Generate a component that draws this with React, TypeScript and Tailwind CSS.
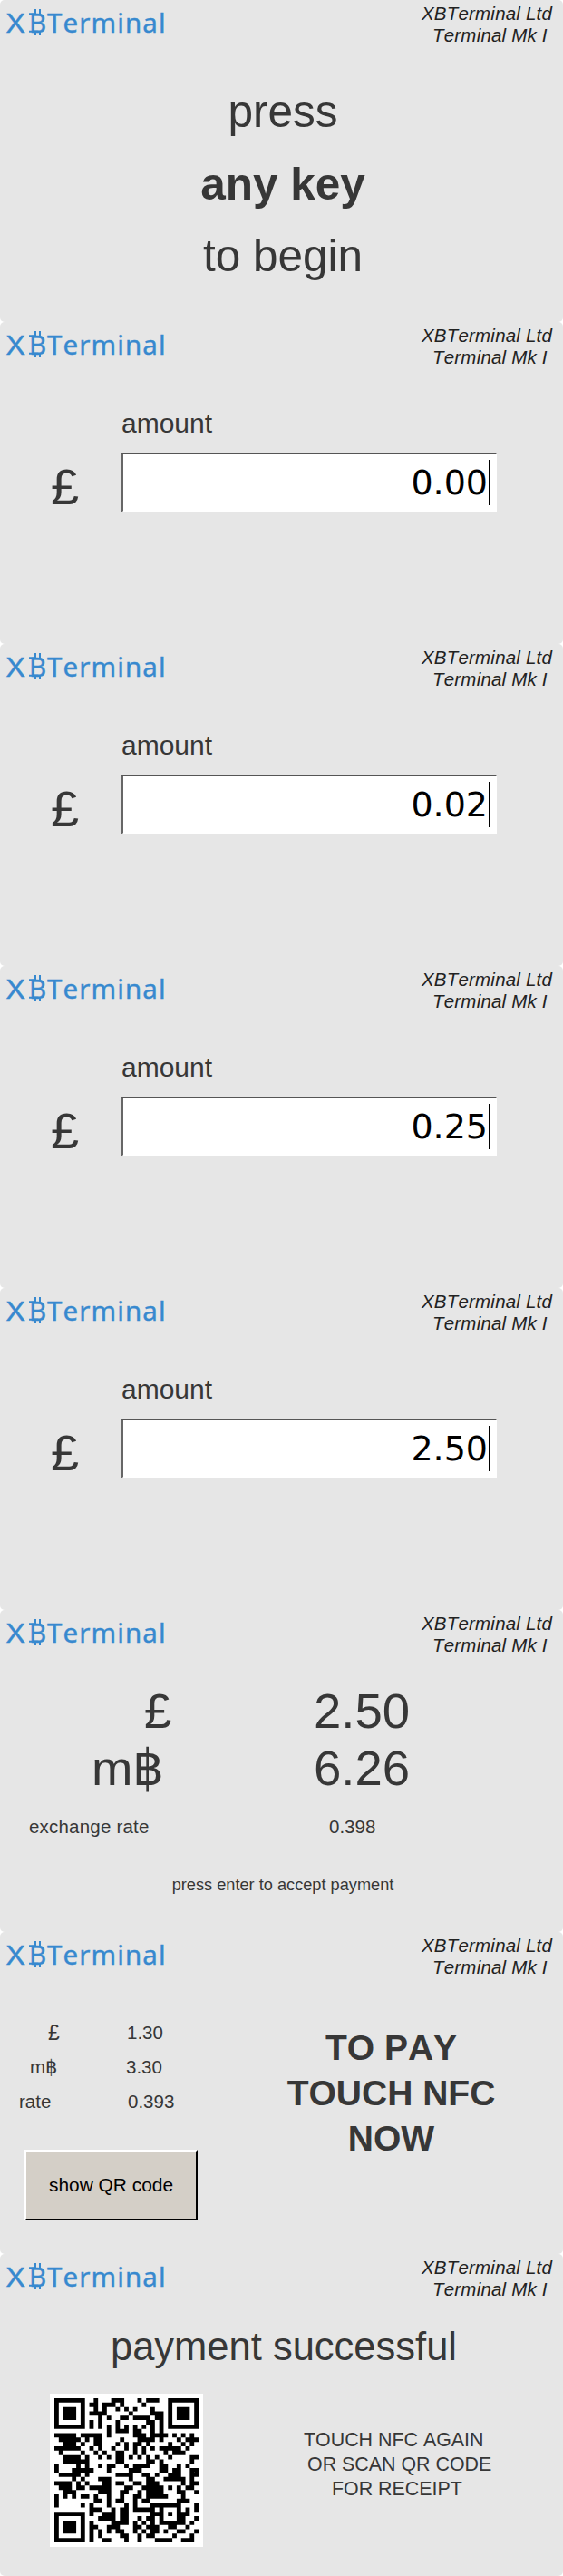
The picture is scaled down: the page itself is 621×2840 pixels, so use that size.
import React from "react";

function Logo() {
  return (
    <div className="flex h-[50px] items-start pl-[7px] pt-[3px] font-['Noto_Sans'] text-[29.5px] leading-[44px] text-[#3789cf] [-webkit-text-stroke:0.4px_#3789cf]">
      <span className="w-[25px] origin-left scale-x-[1.18]">X</span>
      <span className="relative w-[20px]">
        <span className="block">B</span>
        <svg className="absolute left-0 top-[7px]" width="20" height="30" viewBox="0 0 20 30" fill="none" stroke="#3789cf" strokeWidth="2">
          <path d="M7 0v6M12 0v6M7 24v5M12 24v5M0 5.2h6M0 24.8h6" />
        </svg>
      </span>
      <span className="tracking-[1.1px]">Terminal</span>
    </div>
  );
}

function Screen({ children }: { children: React.ReactNode }) {
  return (
    <section className="flex h-[355px] flex-col overflow-hidden rounded-[5px] bg-[#e6e6e6] text-[#373737]">
      <header className="flex h-[60px] shrink-0 justify-between">
        <Logo />
        <div className="w-[160px] pt-[3px] text-[20.5px] italic leading-[24px] tracking-[0.2px] text-[#222]">
          <div className="pl-[4px]">XBTerminal Ltd</div>
          <div className="pl-[16px]">Terminal Mk I</div>
        </div>
      </header>
      {children}
    </section>
  );
}

function AmountScreen({ value }: { value: string }) {
  return (
    <Screen>
      <div className="flex pt-[31px]">
        <div className="w-[134px] pl-[56px] pt-[59px] text-[56px] leading-[64px]">£</div>
        <div>
          <div className="h-[53px] pt-px text-[30px] leading-[40px]">amount</div>
          <div className="flex h-[66px] w-[414px] items-center justify-end border-2 border-b-white border-l-[#666] border-r-white border-t-[#555] bg-white pr-[6px] text-black">
            <span className="font-['DejaVu_Sans'] text-[38px] leading-[50px]">{value}</span>
            <span className="ml-px h-[50px] w-px bg-black" />
          </div>
        </div>
      </div>
    </Screen>
  );
}

const QR_ROWS = [
  "1111111..1...111...1.111..1111111",
  "1.....1.11.111.1....1.....1.....1",
  "1.111.1..1.1..1.1.1...1...1.111.1",
  "1.111.1.1111.....1....111.1.111.1",
  "1.111.1...1.1..11.1111.11.1.111.1",
  "1.....1.1.1...1......11.1.1.....1",
  "1111111.1.1.1.1.1.1.1.1.1.1111111",
  "............1.111.11..1.1........",
  "11111.11111.1.....111.1111.1.1.1.",
  ".11111.1.11....1...1111.1...1.111",
  "..111.1..11...1.1.11.1....1..1.1.",
  "111111..1.1..1..1.1.1.1.11111.1..",
  ".1....1..1.1..11..1.1....1.111...",
  "..1111.1..1.1.11.1.1.1.1..1....11",
  "..111111......11.....11.1......1.",
  "1....1.1..1.11..1.1111..11..1.1..",
  "1...11111...1....111....11.11..11",
  ".11111.1......1111..11.1..111..11",
  "....1.1...111....1...11..11111.1.",
  "1111.1.1...11.11..11.111.....1.11",
  ".111.11.11111...11..11111.1.1.11.",
  "..111.....111..11..1.1111...11..1",
  "1.1.1.11.1..1..1..11.11111...1...",
  "1........11.1.11..1.11......111..",
  "1.....1.1...1...1.1...1111111...1",
  "........111..1.11.11111.1...1.1.1",
  "1111111.1..111.11.....111.1.111..",
  "1.....1...1111.11..1.11.1...11..1",
  "1.111.1.1....1111.1.1.1.111111.1.",
  "1.111.1.11..111...11.111..11..1..",
  "1.111.1.1.1.1.11..1.1.11.1..11..1",
  "1.....1.1.1....11..1.11....1...1.",
  "1111111.1..11...1..1...1111..111.",
];

function QrCode() {
  const cells = QR_ROWS.flatMap((row, y) =>
    [...row].map((cell, x) => (cell === "1" ? `M${x} ${y}h1v1h-1z` : "")),
  ).join("");
  return (
    <svg className="h-[169px] w-[169px] bg-white p-[5px]" viewBox="0 0 33 33">
      <path d={cells} fill="#000" />
    </svg>
  );
}

export default function App() {
  return (
    <main className="w-[621px] bg-white font-['Liberation_Sans',sans-serif] [font-kerning:none]">
      <Screen>
        <div className="pl-[3px] pt-[23px] text-center text-[49.5px] leading-[79.5px]">
          <div>press</div>
          <div className="font-bold">any key</div>
          <div>to begin</div>
        </div>
      </Screen>

      <AmountScreen value="0.00" />
      <AmountScreen value="0.02" />
      <AmountScreen value="0.25" />
      <AmountScreen value="2.50" />

      <Screen>
        <div className="pt-[20px] text-[54.5px] leading-[63px]">
          <div className="flex">
            <div className="w-[346px] pl-[159px]">£</div>
            <div>2.50</div>
          </div>
          <div className="flex">
            <div className="w-[346px] pl-[101px]">m฿</div>
            <div>6.26</div>
          </div>
        </div>
        <div className="flex pt-[18px] text-[20.5px] leading-[30px]">
          <div className="w-[363px] pl-[32px] tracking-[0.2px]">exchange rate</div>
          <div>0.398</div>
        </div>
        <div className="pl-[3px] pt-[34px] text-center text-[18.2px] leading-[30px]">
          press enter to accept payment
        </div>
      </Screen>

      <Screen>
        <div className="flex">
          <div className="w-[242px] pt-[32px] text-[20.5px] leading-[38px]">
            <div className="flex">
              <div className="w-[140px] pl-[53px] text-[23px]">£</div>
              <div>1.30</div>
            </div>
            <div className="flex">
              <div className="w-[139px] pl-[33px]">m฿</div>
              <div>3.30</div>
            </div>
            <div className="flex">
              <div className="w-[141px] pl-[21px]">rate</div>
              <div>0.393</div>
            </div>
            <button className="ml-[27px] mt-[34px] block h-[78px] w-[191px] border-2 border-b-black border-l-white border-r-black border-t-white bg-[#d4cfc7] text-[20.9px] text-black">
              show QR code
            </button>
          </div>
          <div className="w-[379px] pt-[43px] text-center text-[39px] font-bold leading-[50px]">
            <div>TO PAY</div>
            <div>TOUCH NFC</div>
            <div>NOW</div>
          </div>
        </div>
      </Screen>

      <Screen>
        <div className="h-[94px] pl-[5px] pt-[17px] text-center text-[43.5px] leading-[50px]">payment successful</div>
        <div className="flex pl-[55px]">
          <QrCode />
          <div className="pl-[111px] pt-[38px] text-[21.4px] leading-[27px]">
            <div>TOUCH NFC AGAIN</div>
            <div className="pl-[4px]">OR SCAN QR CODE</div>
            <div className="pl-[31px]">FOR RECEIPT</div>
          </div>
        </div>
      </Screen>
    </main>
  );
}
